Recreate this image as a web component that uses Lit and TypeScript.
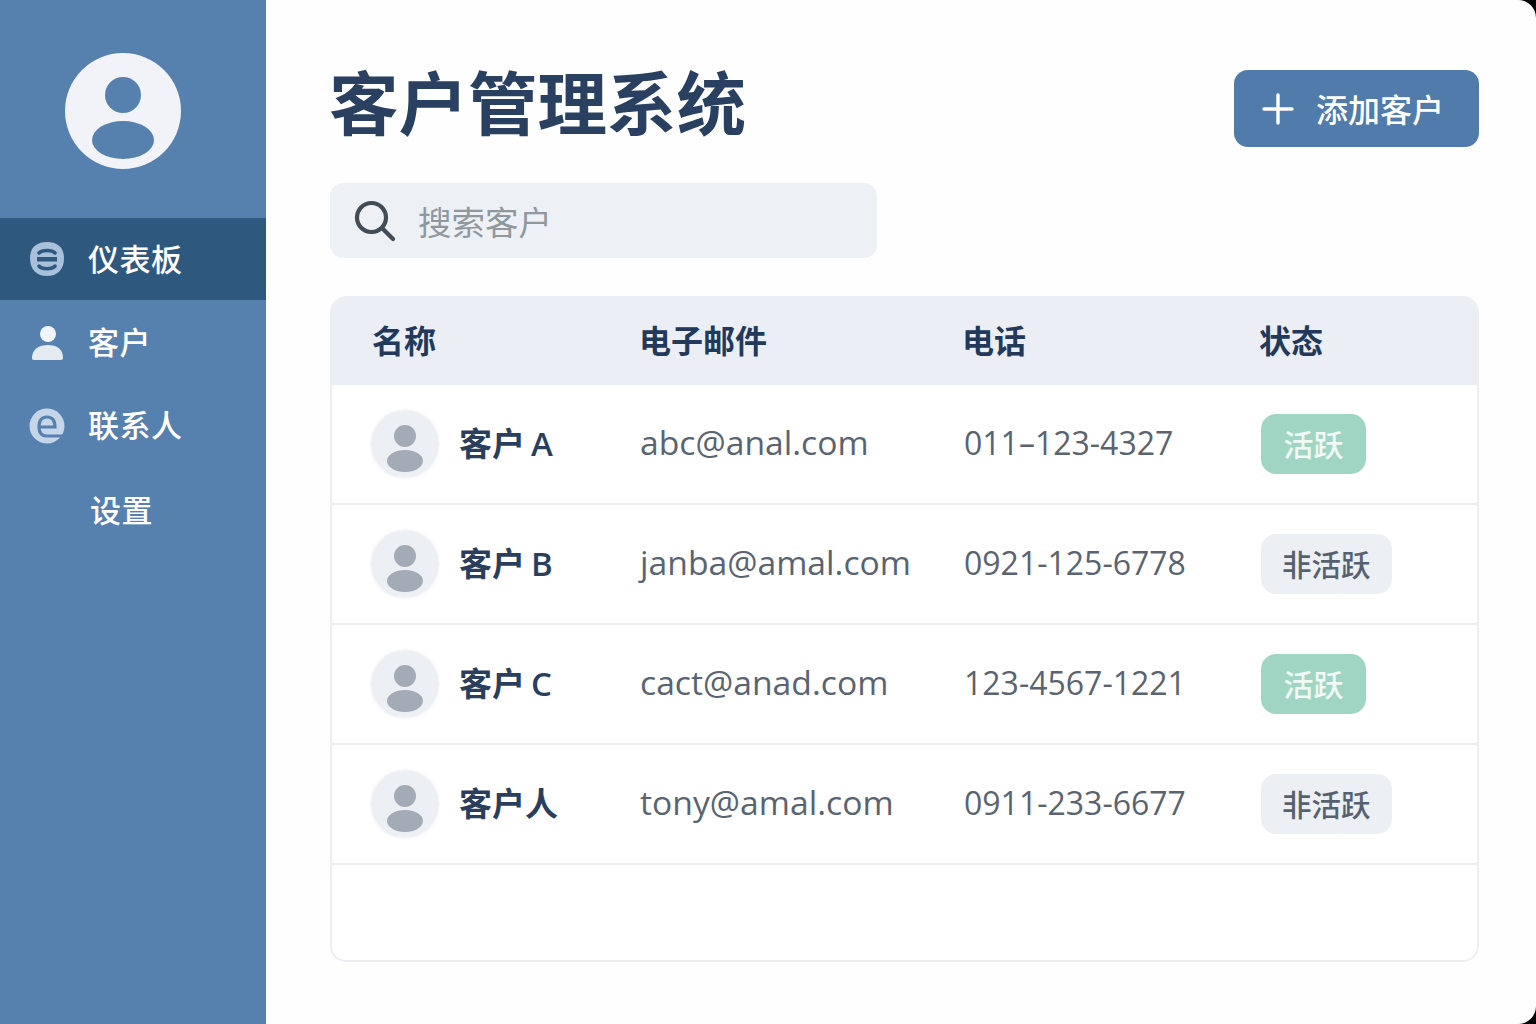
import { LitElement, html, css } from "lit";
import { customElement } from "lit/decorators.js";

const rows = [
  { name: "客户", tag: "A", email: "abc@anal.com", phone: "011–123-4327", active: true },
  { name: "客户", tag: "B", email: "janba@amal.com", phone: "0921-125-6778", active: false },
  { name: "客户", tag: "C", email: "cact@anad.com", phone: "123-4567-1221", active: true },
  { name: "客户人", tag: "", email: "tony@amal.com", phone: "0911-233-6677", active: false },
];

@customElement("app-root")
export class AppRoot extends LitElement {
  static styles = css`
    :host { display: block; width: 1536px; height: 1024px; overflow: hidden; background: #000; font-family: "Open Sans", "Noto Sans CJK SC", sans-serif; }
    .app { display: flex; height: 1024px; }
    .side { width: 266px; flex: none; background: #5681af; display: flex; flex-direction: column; }
    .logo { display: flex; justify-content: center; padding: 53px 20px 49px 0; height: 116px; }
    .logo svg { width: 116px; height: 116px; display: block; }
    .nav { display: flex; align-items: center; height: 83px; color: #fff; font-size: 31px; font-weight: 500; letter-spacing: 0.5px; }
    .nav.on { background: #2f587e; height: 82px; margin-bottom: 1px; }
    .nav .label { padding-bottom: 4px; }
    .nav svg { width: 36px; height: 36px; margin-left: 29px; margin-right: 23px; flex: none; }
    .nav .none { width: 36px; margin-left: 29px; margin-right: 25px; flex: none; }
    .main { flex: 1; background: #fefefe; border-radius: 0 18px 18px 0; padding: 0 57px 0 64px; display: flex; flex-direction: column; }
    .head { display: flex; justify-content: space-between; align-items: flex-start; height: 183px; }
    h1 { margin: 57px 0 0 -1px; font-size: 69.500px; line-height: 92px; font-weight: 700; color: #2a4060; white-space: nowrap; }
    .add { margin-top: 70px; width: 245px; height: 77px; box-sizing: border-box; background: #507bab; border-radius: 14px; color: #fff; display: flex; align-items: center; padding-left: 28px; gap: 22px; font-size: 32px; font-weight: 500; }
    .add svg { width: 32px; height: 32px; flex: none; }
    .add span { padding-bottom: 2px; }
    .search { width: 547px; height: 75px; background: #edf1f6; border-radius: 13px; display: flex; align-items: center; padding-left: 24px; gap: 22px; box-sizing: border-box; color: #8f979f; font-size: 33.500px; }
    .search svg { width: 42px; height: 42px; flex: none; }
    .table { margin-top: 38px; height: 666px; box-sizing: border-box; border: 2px solid #eceef2; border-top: 0; border-radius: 16px; background: #fff; overflow: hidden; }
    .tr { display: grid; grid-template-columns: 309px 323px 297px 1fr; align-items: center; box-sizing: border-box; }
    .th { height: 89px; background: #ebeff5; color: #22395b; font-size: 32px; font-weight: 700; margin: 0 -2px; padding-bottom: 3px; }
    .th div:first-child { padding-left: 42px; }
    .row { height: 120px; border-bottom: 2px solid #eceef2; color: #5a6470; }
    .cell { display: flex; align-items: center; gap: 20px; padding-left: 39px; font-size: 33px; font-weight: 600; color: #2a3f5d; }
    .cell .who { padding-bottom: 5px; }
    .mail { font-size: 33.700px; padding-bottom: 4px; margin-left: -1px; }
    .tel { font-size: 32px; padding-bottom: 4px; }
    .ava { width: 68px; height: 68px; flex: none; border-radius: 50%; box-shadow: 0 0 3px #e6e9ef; }
    .tag { margin-left: 6px; }
    .pill { display: inline-flex; align-items: center; height: 60px; box-sizing: border-box; padding: 0 21px 2px; border-radius: 15px; font-weight: 500; vertical-align: middle; }
    .pill.on { background: #a1d5c3; color: #f1faf6; font-size: 30px; padding: 0 22.500px 2px; }
    .pill.off { background: #eceff4; color: #56616e; font-size: 29.500px; }
    .st { display: flex; align-items: center; }
  `;

  private avatar() {
    return html`<svg class="ava" viewBox="0 0 68 68">
      <circle cx="34" cy="34" r="34" fill="#eceff4"/>
      <circle cx="34" cy="26" r="11" fill="#a3abb7"/>
      <ellipse cx="34" cy="51" rx="18" ry="11" fill="#a3abb7"/>
    </svg>`;
  }

  render() {
    return html`<div class="app">
      <aside class="side">
        <div class="logo">
          <svg viewBox="0 0 116 116">
            <circle cx="58" cy="58" r="58" fill="#f1f3f8"/>
            <circle cx="58" cy="42" r="18" fill="#5681af"/>
            <ellipse cx="58" cy="87" rx="31" ry="19" fill="#5681af"/>
          </svg>
        </div>
        <div class="nav on">
          <svg viewBox="0 0 36 36">
            <path d="M18 1C28 1 35 6 35 17C35 29 28 35 18 35C8 35 1 29 1 17C1 6 8 1 18 1Z" fill="#a8c0da"/>
            <path d="M10 12C13 8.500 23 8.500 26 12M10 25C13 28.500 23 28.500 26 25" stroke="#2f587e" stroke-width="3.500" fill="none" stroke-linecap="round"/>
            <rect x="8" y="16" width="20" height="4.500" fill="#2f587e"/>
          </svg><span class="label">仪表板</span>
        </div>
        <div class="nav">
          <svg viewBox="0 0 36 36">
            <circle cx="19" cy="9" r="8" fill="#f1f4f8"/>
            <path d="M3 33C3 24 10 20 19 20C28 20 34 24 34 33C34 35 32 35 30 35H7C4 35 3 35 3 33Z" fill="#e4ebf3"/>
          </svg><span class="label">客户</span>
        </div>
        <div class="nav">
          <svg viewBox="0 0 36 36">
            <circle cx="18" cy="18" r="17.500" fill="#c5d6e8"/>
            <path d="M10 19H26C26 12 23 9 18 9C13 9 10 12 10 19C10 25 13 28 18 28H36" fill="none" stroke="#5681af" stroke-width="3.200"/>
          </svg><span class="label">联系人</span>
        </div>
        <div class="nav"><span class="none"></span>设置</div>
      </aside>
      <main class="main">
        <div class="head">
          <h1>客户管理系统</h1>
          <div class="add">
            <svg viewBox="0 0 32 32"><path d="M16 2V30M2 16H30" stroke="#fff" stroke-width="3.400" stroke-linecap="round" fill="none"/></svg>
            <span>添加客户</span>
          </div>
        </div>
        <div class="search">
          <svg viewBox="0 0 42 42" fill="none" stroke="#424c56" stroke-width="4.200" stroke-linecap="round">
            <circle cx="17.500" cy="17.500" r="14.500"/><path d="M28 28L39 39"/>
          </svg>
          搜索客户
        </div>
        <div class="table">
          <div class="tr th"><div>名称</div><div>电子邮件</div><div>电话</div><div>状态</div></div>
          ${rows.map(
            (r) => html`<div class="tr row">
              <div class="cell">${this.avatar()}<span class="who">${r.name}${r.tag ? html`<span class="tag">${r.tag}</span>` : ""}</span></div>
              <div class="mail">${r.email}</div>
              <div class="tel">${r.phone}</div>
              <div class="st"><span class="pill ${r.active ? "on" : "off"}">${r.active ? "活跃" : "非活跃"}</span></div>
            </div>`
          )}
        </div>
      </main>
    </div>`;
  }
}
